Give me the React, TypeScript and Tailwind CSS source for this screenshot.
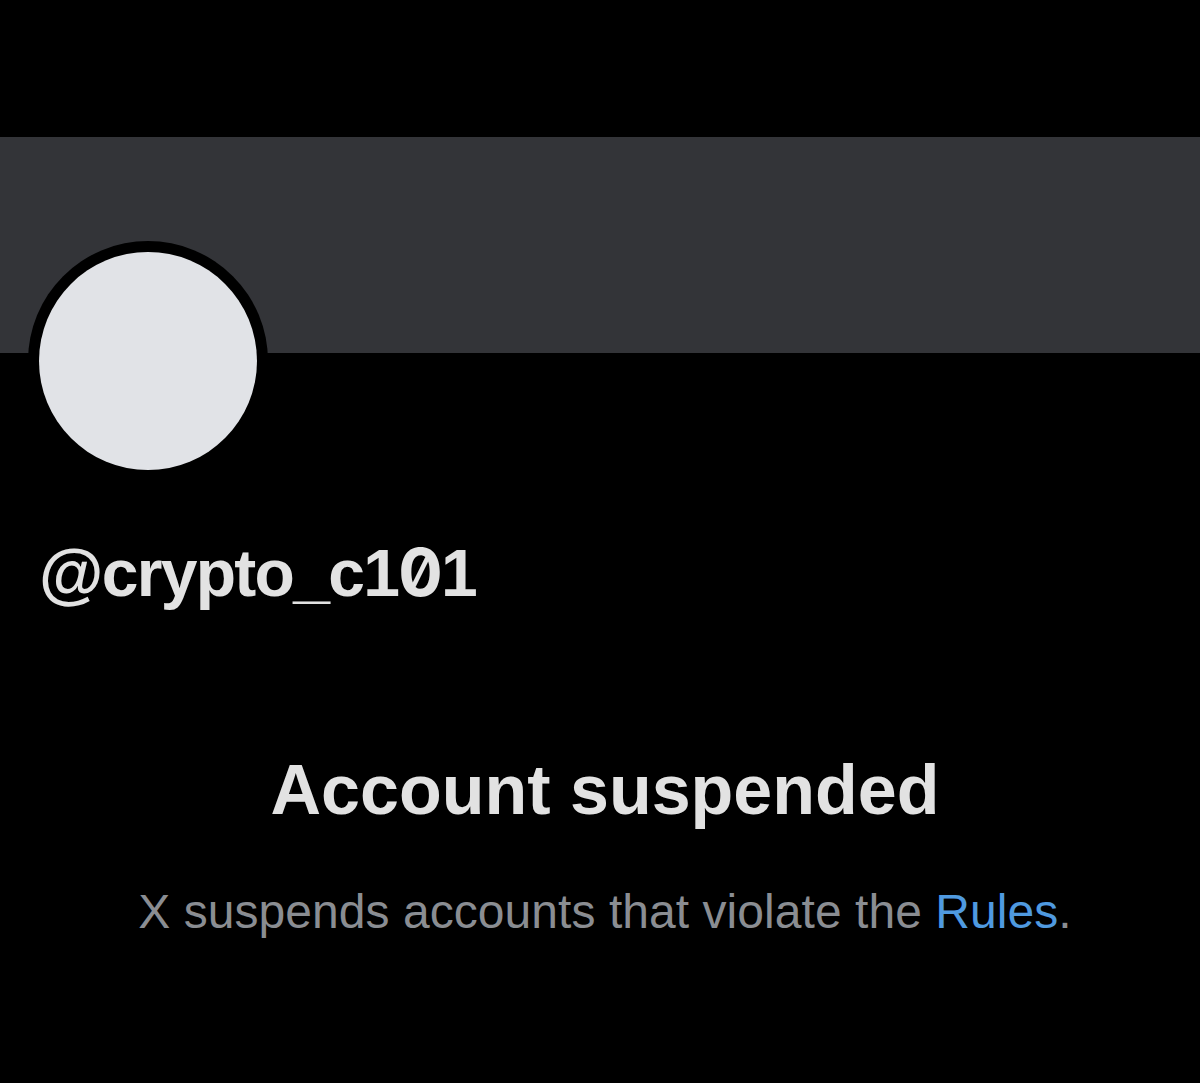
export default function App() {
  return (
    <div
      className="relative w-full h-[1083px] bg-black overflow-hidden"
      style={{ fontFamily: '"Liberation Sans", Arial, sans-serif' }}
    >
      {/* top spacer */}
      <div className="h-[137px]" />

      {/* banner + avatar */}
      <div className="relative h-[216px] bg-[#333438]">
        <div className="absolute left-[28px] top-[104px] w-[240px] h-[240px] rounded-full bg-black p-[11px]">
          <div className="w-full h-full rounded-full bg-[#e1e3e7]" />
        </div>
      </div>

      {/* handle */}
      <div className="mt-[186px] pl-[39px]">
        <h2 className="text-[66px] leading-none font-bold tracking-[-1.7px] text-[#e2e2e2]">
          @crypto_c1
          <span
            className="slashed-zero"
            style={{ fontFamily: "Inter, sans-serif" }}
          >
            0
          </span>
          1
        </h2>
      </div>

      {/* suspended notice */}
      <div className="flex flex-col items-center pl-[10px]">
        <h1 className="mt-[149px] text-[70px] leading-none font-bold text-[#e2e2e2]">
          Account suspended
        </h1>
        <p className="mt-[63px] text-[48px] leading-none tracking-[0.05px] text-[#8a8d92]">
          X suspends accounts that violate the{" "}
          <a href="#" className="text-[#4f9ae0]">
            Rules
          </a>
          .
        </p>
      </div>
    </div>
  );
}
